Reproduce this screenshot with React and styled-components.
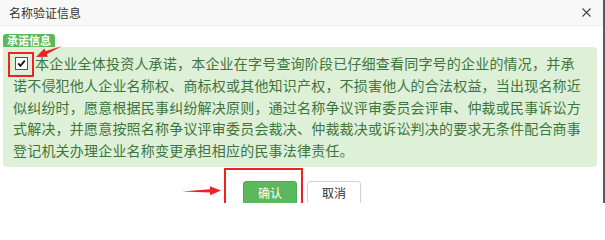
import React from 'react';
import styled, { createGlobalStyle } from 'styled-components';

const GlobalStyle = createGlobalStyle`
  html, body {
    margin     : 0;
    padding    : 0;
    background : #fff;
    font-family: "Liberation Sans", "Noto Sans CJK SC", sans-serif;
  }
`;

const colors = {
  green      : '#5cb85c',
  greenDark  : '#4cae4c',
  alertBg    : '#dff0d8',
  alertText  : '#3c763d',
  annotation : '#ec2323',
};

const Dialog = styled.div`
  width        : 603px;
  height       : 203px;
  overflow     : hidden;
  border-right : 2px solid #5a5a5a;
  background   : #fff;
`;

const Header = styled.div`
  height          : 25px;
  display         : flex;
  align-items     : center;
  justify-content : space-between;
  padding         : 0 12px 0 9px;
  background      : #f8f8f8;
  border-bottom   : 1px solid #eee;
  font-size       : 12px;
  color           : #333;
  font-family     : "Noto Sans CJK SC", sans-serif;
`;

const Close = styled.svg`
  width  : 9px;
  height : 9px;
`;

const Body = styled.div`
  display        : flex;
  flex-direction : column;
  padding        : 8px 6px 0 3px;
`;

const Tag = styled.div`
  align-self    : flex-start;
  height        : 13px;
  line-height   : 13px;
  padding       : 0 4px;
  background    : ${colors.green};
  color         : #fff;
  font-size     : 11px;
  font-weight   : bold;
  border-radius : 3px 3px 0 0;
  font-family   : "Noto Sans CJK SC", sans-serif;
`;

const Alert = styled.div`
  position      : relative;
  background    : ${colors.alertBg};
  color         : ${colors.alertText};
  border-radius : 0 4px 4px 4px;
  padding       : 6px 12px 5px 10px;
  font-size     : 14px;
  line-height   : 21.75px;
  letter-spacing: 0.2px;
  font-family   : "Noto Sans CJK SC", sans-serif;
`;

const Check = styled.span`
  display        : inline-block;
  width          : 11px;
  height         : 11px;
  margin         : 0 7px 0 2px;
  border         : 1px solid #555;
  background     : #fff;
  vertical-align : -1px;
  svg {
    display : block;
    width   : 11px;
    height  : 11px;
  }
`;

const Highlight = styled.span`
  position       : absolute;
  border         : 2px solid ${colors.annotation};
  pointer-events : none;
`;

const Arrow = styled.svg`
  position : absolute;
  left     : 0;
  top      : 0;
  overflow : visible;
`;

const Footer = styled.div`
  display         : flex;
  justify-content : center;
  gap             : 10px;
  margin-top      : 14px;
  padding-left    : 4px;
`;

const ButtonWrap = styled.div`
  position : relative;
`;

const Button = styled.button`
  width         : 54px;
  height        : 24px;
  padding       : 0;
  border-radius : 3px;
  font-size     : 12px;
  font-family   : "Noto Sans CJK SC", sans-serif;
  cursor        : pointer;
  border        : 1px solid ${({ $primary }) => $primary ? colors.greenDark : '#d2d2d2'};
  background    : ${({ $primary }) => $primary ? colors.green : '#fff'};
  color         : ${({ $primary }) => $primary ? '#fff' : '#333'};
`;

// red annotation arrow, drawn from tail to head
const RedArrow = ({ from, to }) => {
  const [x1, y1] = from;
  const [x2, y2] = to;
  const dx = x2 - x1;
  const dy = y2 - y1;
  const len = Math.hypot(dx, dy);
  const ux = dx / len;
  const uy = dy / len;
  const nx = -uy;
  const ny = ux;
  const head = 11;
  const bx = x2 - ux * head;
  const by = y2 - uy * head;
  const pts = [
    [x1, y1],
    [bx + nx * 1.6, by + ny * 1.6],
    [bx + nx * 4.5, by + ny * 4.5],
    [x2, y2],
    [bx - nx * 4.5, by - ny * 4.5],
    [bx - nx * 1.6, by - ny * 1.6],
  ].map(p => p.join(',')).join(' ');
  return (
    <Arrow width="1" height="1">
      <polygon points={pts} fill={colors.annotation} />
    </Arrow>
  );
};

export default function App() {
  return (
    <>
      <GlobalStyle />
      <Dialog>
        <Header>
          <span>名称验证信息</span>
          <Close viewBox="0 0 9 9">
            <path d="M0.5 0.5 L8.5 8.5 M8.5 0.5 L0.5 8.5" stroke="#444" strokeWidth="1.1" fill="none" />
          </Close>
        </Header>
        <Body>
          <Tag>承诺信息</Tag>
          <Alert>
            <Check>
              <svg viewBox="0 0 11 11">
                <path d="M2.2 5.4 L4.4 7.8 L8.8 2.6" stroke="#111" strokeWidth="1.8" fill="none" />
              </svg>
            </Check>
            本企业全体投资人承诺，本企业在字号查询阶段已仔细查看同字号的企业的情况，并承诺不侵犯他人企业名称权、商标权或其他知识产权，不损害他人的合法权益，当出现名称近似纠纷时，愿意根据民事纠纷解决原则，通过名称争议评审委员会评审、仲裁或民事诉讼方式解决，并愿意按照名称争议评审委员会裁决、仲裁裁决或诉讼判决的要求无条件配合商事登记机关办理企业名称变更承担相应的民事法律责任。
            <Highlight style={{ left: 5, top: 5, width: 22, height: 21 }} />
            <RedArrow from={[59, -1]} to={[33, 10]} />
          </Alert>
          <Footer>
            <ButtonWrap>
              <Button $primary>确认</Button>
              <Highlight style={{ left: -19, top: -13, width: 75, height: 60 }} />
              <RedArrow from={[-61, 10.5]} to={[-22, 9.5]} />
            </ButtonWrap>
            <Button>取消</Button>
          </Footer>
        </Body>
      </Dialog>
    </>
  );
}
